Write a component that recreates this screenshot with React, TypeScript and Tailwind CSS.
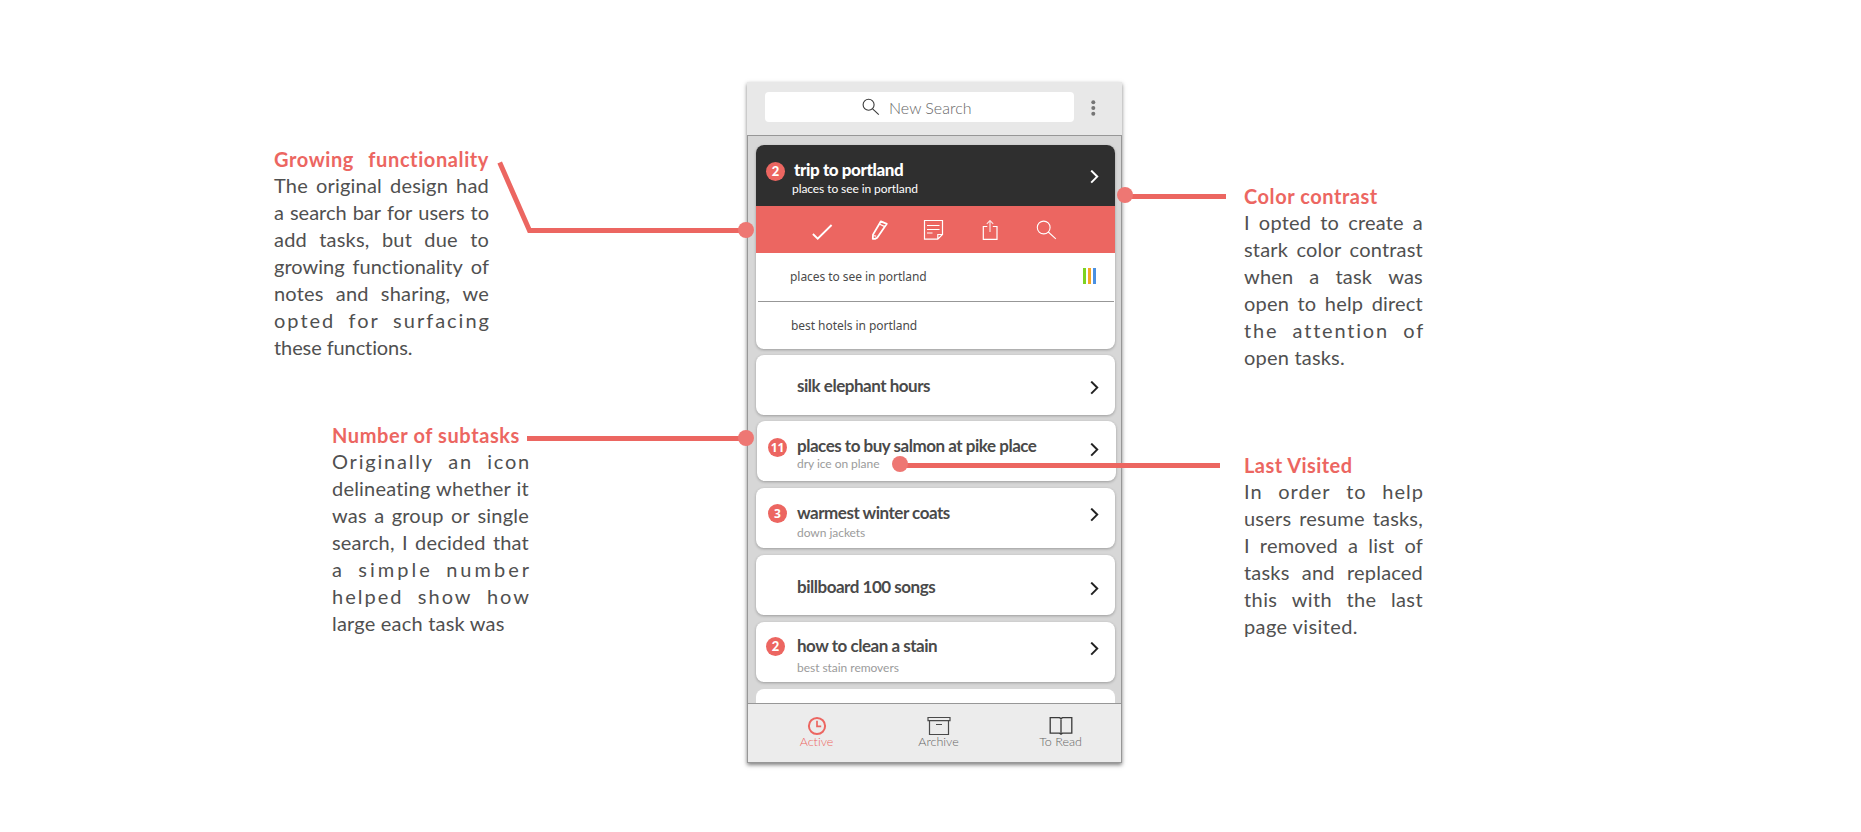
import type { ReactNode } from "react";

type Line = { text: string; cls: string };

function Note({ title, titleCls, lines, last, cls }: { title: string; titleCls: string; lines: Line[]; last: Line; cls: string }) {
  return (
    <section className={`whitespace-nowrap font-['Lato'] text-[20px] leading-[27px] text-[#505050] [font-variant-ligatures:none] ${cls}`}>
      <h2 className={`mb-[-1px] font-bold text-[#ec6661] ${titleCls}`}>{title}</h2>
      {lines.map((l) => (
        <p key={l.text} className={`flex justify-between ${l.cls}`}>
          {l.text.split(" ").map((w, i) => (
            <span key={i}>{w}</span>
          ))}
        </p>
      ))}
      <p className={last.cls}>{last.text}</p>
    </section>
  );
}

function Badge({ n, cls }: { n: string; cls: string }) {
  return (
    <span className={`flex size-[19px] shrink-0 items-center justify-center rounded-full bg-[#ec6661] leading-none text-white ${cls}`}>
      {n}
    </span>
  );
}

function Chevron({ cls }: { cls: string }) {
  return (
    <svg className={`ml-auto h-[14px] w-[9px] shrink-0 ${cls}`} viewBox="0 0 9 14" fill="none" stroke="currentColor" strokeWidth="2">
      <path d="M1.2 0.6 7.2 6.6 1.2 12.6" />
    </svg>
  );
}

type CardProps = { title: string; titleCls: string; sub?: string; subCls?: string; badge?: ReactNode; chevron: string; cls: string };

function Card({ title, titleCls, sub, subCls, badge, chevron, cls }: CardProps) {
  return (
    <article className={`flex h-[60px] w-[359px] shrink-0 items-start rounded-lg bg-white shadow-[0_1px_3px_rgba(0,0,0,0.28)] ${cls}`}>
      <div className="w-[41px] shrink-0">{badge}</div>
      <div className="whitespace-nowrap">
        <h3 className={`text-[17px] leading-5 font-bold tracking-[-0.48px] text-[#4a4a4a] ${titleCls}`}>{title}</h3>
        {sub && <p className={`text-[12px] leading-4 tracking-[-0.04px] text-[#9b9b9b] ${subCls}`}>{sub}</p>}
      </div>
      <Chevron cls={`text-[#222] ${chevron}`} />
    </article>
  );
}

function Tab({ label, cls, children }: { label: string; cls: string; children: ReactNode }) {
  return (
    <div className={`flex w-[122px] flex-col items-center pt-3 ${cls}`}>
      {children}
      <span className="mt-[-3px] text-[12.5px] leading-4 font-light">{label}</span>
    </div>
  );
}

function Phone() {
  return (
    <div className="mt-[82px] flex h-[681px] w-[375px] shrink-0 flex-col font-['Lato'] shadow-[0_2px_4px_rgba(0,0,0,0.5)] [font-variant-ligatures:none]">
      <header className="flex h-[53px] shrink-0 items-start bg-[#e8e8e8] pt-[10px] pl-[18px]">
        <div className="flex h-[30px] w-[309px] items-center rounded bg-white pl-[97px]">
          <svg className="h-[18px] w-[18px]" viewBox="0 0 18 18" fill="none" stroke="#3a3a3a" strokeWidth="1.1">
            <circle cx="6.6" cy="6.8" r="5.5" />
            <path d="M10.6 10.8 16.8 16.6" />
          </svg>
          <span className="mt-px ml-[9px] text-[16px] leading-5 font-light whitespace-nowrap text-[#666]">New Search</span>
        </div>
        <svg className="mt-[8px] ml-[17px] h-[16px] w-[5px]" viewBox="0 0 5 16" fill="#757575">
          <circle cx="2.3" cy="2.3" r="2" />
          <circle cx="2.3" cy="8" r="2" />
          <circle cx="2.3" cy="13.7" r="2" />
        </svg>
      </header>

      <main className="flex h-[568px] shrink-0 flex-col overflow-hidden border border-b-0 border-[#979797] bg-[#d7d7d7] pt-[9px] pl-2">
        <article className="flex h-[204px] w-[359px] shrink-0 flex-col overflow-hidden rounded-lg bg-white shadow-[0_1px_3px_rgba(0,0,0,0.28)]">
          <div className="flex h-[61px] shrink-0 items-start bg-[#2f2f2f] pr-4 pl-[10px] text-white">
            <Badge n="2" cls="mt-[17px] text-[13px] font-black" />
            <div className="pt-[15px] pl-[7px] whitespace-nowrap">
              <h3 className="pl-[2px] text-[17px] leading-5 font-black tracking-[-0.42px]">trip to portland</h3>
              <p className="mt-px text-[12px] leading-4 tracking-[-0.08px]">places to see in portland</p>
            </div>
            <Chevron cls="mt-[25px]" />
          </div>
          <div className="flex h-[47px] shrink-0 gap-8 bg-[#ec6661] pt-3 pl-[54px]">
            <svg className="size-6" viewBox="0 0 24 24" fill="none" stroke="white" strokeWidth="1.9">
              <path d="M2.9 16 7.7 20.6 21.6 7" />
            </svg>
            <svg className="size-6" viewBox="0 0 24 24" fill="none" stroke="white" strokeWidth="1.8" strokeLinejoin="round">
              <path d="M6.8 20.8 7 16.6 14.9 3.3 20.8 5.8 11.2 19.7 9 20.9Z" />
              <path d="M13.2 6 18.8 8.6M8.2 17.6 10.2 18.2" strokeWidth="1.2" />
            </svg>
            <svg className="size-6" viewBox="0 0 24 24" fill="none" stroke="white" strokeWidth="1.2">
              <path d="M2.5 2.5H20.5V16.5L15.8 21.2H2.5Z M15.8 21V16.5H20.3" />
              <path d="M5 7.5H17.5M5 11.5H17.5M5 15H10.5" />
            </svg>
            <svg className="size-6" viewBox="0 0 24 24" fill="none" stroke="white" strokeWidth="1.2">
              <path d="M9.3 8.5H5.3V21.3H19V8.5H14.8" />
              <path d="M12 14V2.8M8.8 5.8 12 2.6 15.2 5.8" strokeOpacity="0.8" />
            </svg>
            <svg className="size-6" viewBox="0 0 24 24" fill="none" stroke="white" strokeWidth="1.1">
              <circle cx="9.7" cy="9.5" r="6.4" />
              <path d="M14.3 14 21.8 20.8" />
            </svg>
          </div>
          <div className="flex h-12 shrink-0 items-center pr-[19px] pl-[34px] font-['Noto_Sans'] text-[12px] tracking-[-0.05px] text-[#4a4a4a]">
            <span className="whitespace-nowrap">places to see in portland</span>
            <span className="mb-[2px] ml-auto flex h-4 gap-[2px]">
              <i className="w-[3px] bg-[#7ed321]" />
              <i className="w-[3px] bg-[#f5a623]" />
              <i className="w-[3px] bg-[#4a90e2]" />
            </span>
          </div>
          <div className="mr-px ml-[2px] flex grow items-center border-t border-[#979797] pl-[33px] font-['Noto_Sans'] text-[12px] tracking-[-0.05px] text-[#4a4a4a]">
            <span className="whitespace-nowrap">best hotels in portland</span>
          </div>
        </article>

        <Card cls="mt-[6px] pr-4" title="silk elephant hours" titleCls="mt-[21px]" chevron="mt-[26px]" />
        <Card cls="mt-[6px] ml-px pr-[17px] [&>div:first-child]:w-10" title="places to buy salmon at pike place" titleCls="mt-[15px]" sub="dry ice on plane" badge={<Badge n="11" cls="mt-[17px] ml-[11px] font-['Noto_Sans'] text-[12px] font-bold" />} chevron="mt-[22px]" />
        <Card cls="mt-[7px] pr-4" title="warmest winter coats" titleCls="mt-[15px]" sub="down jackets" subCls="mt-[2px]" badge={<Badge n="3" cls="mt-[16px] ml-[12px] font-['Noto_Sans'] text-[12px] font-bold" />} chevron="mt-[20px]" />
        <Card cls="mt-[7px] pr-4" title="billboard 100 songs" titleCls="mt-[22px]" chevron="mt-[27px]" />
        <Card cls="mt-[7px] pr-4" title="how to clean a stain" titleCls="mt-[14px]" sub="best stain removers" subCls="mt-[4px]" badge={<Badge n="2" cls="mt-[15px] ml-[10px] text-[13px] font-black" />} chevron="mt-[20px]" />
        <div className="mt-[7px] h-[60px] w-[359px] shrink-0 rounded-lg bg-white" />
      </main>

      <nav className="flex h-[60px] shrink-0 border border-[#979797] bg-[#ececec] pl-2">
        <Tab label="Active" cls="text-[#ec6661]">
          <svg className="mb-px size-[20px]" viewBox="0 0 20 20" fill="none" stroke="currentColor" strokeWidth="2">
            <circle cx="10" cy="10" r="8.1" />
            <path d="M10 4.8V10.3H14.2" strokeWidth="1.7" />
          </svg>
        </Tab>
        <Tab label="Archive" cls="ml-px text-[#666]">
          <svg className="mb-px h-5 w-6" viewBox="0 0 24 20" fill="none" stroke="#4a4a4a" strokeWidth="1.2">
            <path d="M1 1.5H23V4.7H1Z M2.5 5V18.5H21.5V5 M9 8.5H15" />
          </svg>
        </Tab>
        <Tab label="To Read" cls="ml-px text-[#666]">
          <svg className="mb-px h-5 w-6" viewBox="0 0 24 20" fill="none" stroke="#3a3a3a" strokeWidth="1.3">
            <path d="M1.2 1.6H10.5L12 2.6 13.5 1.6H22.8V17.2H13.5L12 18.2 10.5 17.2H1.2Z M12 2.6V18" />
          </svg>
        </Tab>
      </nav>
    </div>
  );
}

function Connectors() {
  return (
    <svg className="pointer-events-none absolute inset-0 h-[832px] w-[1861px]" viewBox="0 0 1861 832" fill="none" stroke="#ec6661" strokeWidth="5">
      <path d="M499.7 162.5 529.5 230.5H746M527 438.5H746M1125 196.5H1226M900 465.5H1220" />
      <g fill="#ee7773" stroke="none">
        <circle cx="746" cy="230" r="8" />
        <circle cx="746" cy="438" r="8" />
        <circle cx="1125" cy="195" r="8" />
        <circle cx="900" cy="464" r="8" />
      </g>
    </svg>
  );
}

export default function App() {
  return (
    <div className="relative flex h-[832px] w-[1861px] items-start overflow-hidden bg-white">
      <div className="flex w-[747px] shrink-0 flex-col pt-[146px]">
        <Note
          cls="ml-[274px] w-[215px]"
          title="Growing functionality"
          titleCls="[text-align-last:justify] tracking-[0.6px]"
          lines={[
            { text: "The original design had", cls: "tracking-[0.2px]" },
            { text: "a search bar for users to", cls: "" },
            { text: "add tasks, but due to", cls: "tracking-[0.2px]" },
            { text: "growing functionality of", cls: "" },
            { text: "notes and sharing, we", cls: "tracking-[0.2px]" },
            { text: "opted for surfacing", cls: "mr-[-2px] tracking-[2px]" },
          ]}
          last={{ text: "these functions.", cls: "tracking-[-0.1px]" }}
        />
        <Note
          cls="mt-[61px] ml-[332px] w-[197px]"
          title="Number of subtasks"
          titleCls="tracking-[0.6px]"
          lines={[
            { text: "Originally an icon", cls: "mr-[-2px] tracking-[1.8px]" },
            { text: "delineating whether it", cls: "tracking-[0.2px]" },
            { text: "was a group or single", cls: "tracking-[0.2px]" },
            { text: "search, I decided that", cls: "tracking-[0.2px]" },
            { text: "a simple number", cls: "mr-[-3px] tracking-[3px]" },
            { text: "helped show how", cls: "mr-[-2px] tracking-[2px]" },
          ]}
          last={{ text: "large each task was", cls: "tracking-[0.2px]" }}
        />
      </div>
      <Phone />
      <div className="flex flex-col pt-[183px] pl-[122px]">
        <Note
          cls="w-[179px]"
          title="Color contrast"
          titleCls="tracking-[0.55px]"
          lines={[
            { text: "I opted to create a", cls: "tracking-[0.2px]" },
            { text: "stark color contrast", cls: "tracking-[0.2px]" },
            { text: "when a task was", cls: "tracking-[0.2px]" },
            { text: "open to help direct", cls: "tracking-[0.2px]" },
            { text: "the attention of", cls: "mr-[-2px] tracking-[1.8px]" },
          ]}
          last={{ text: "open tasks.", cls: "tracking-[0.2px]" }}
        />
        <Note
          cls="mt-[81px] w-[179px]"
          title="Last Visited"
          titleCls="tracking-[0.45px]"
          lines={[
            { text: "In order to help", cls: "mr-[-1px] tracking-[1px]" },
            { text: "users resume tasks,", cls: "tracking-[0.2px]" },
            { text: "I removed a list of", cls: "tracking-[0.2px]" },
            { text: "tasks and replaced", cls: "tracking-[0.2px]" },
            { text: "this with the last", cls: "tracking-[0.4px]" },
          ]}
          last={{ text: "page visited.", cls: "tracking-[0.4px]" }}
        />
      </div>
      <Connectors />
    </div>
  );
}
